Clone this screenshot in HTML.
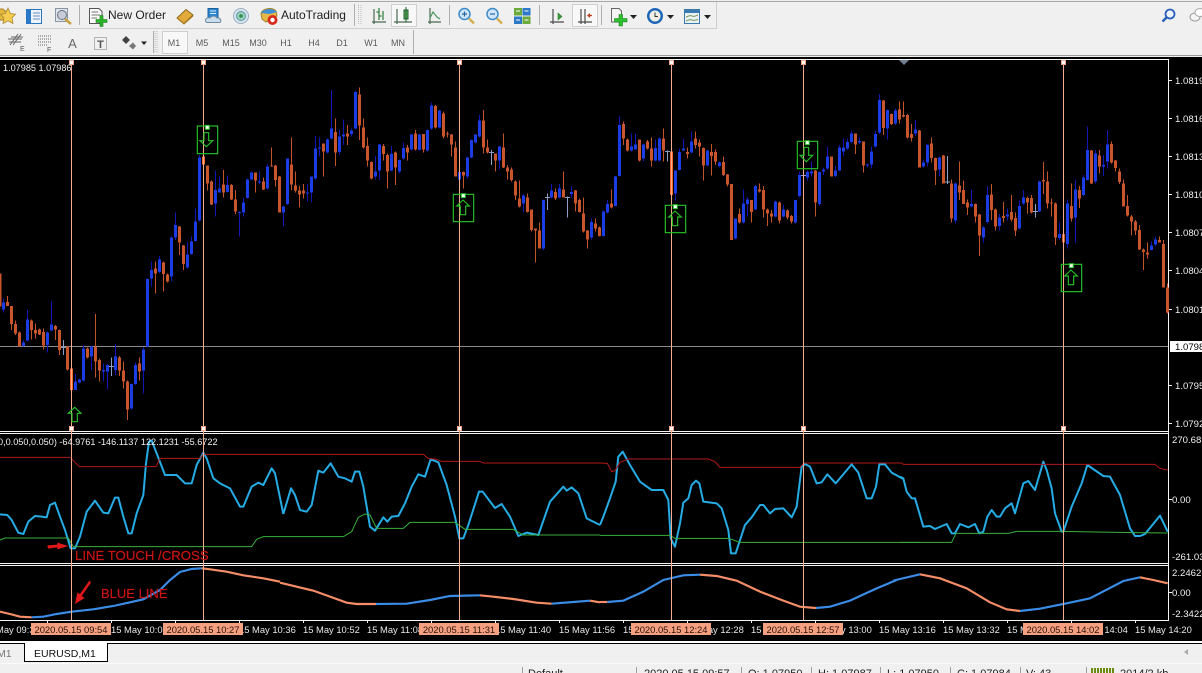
<!DOCTYPE html>
<html><head><meta charset="utf-8"><title>EURUSD,M1</title>
<style>
html,body{margin:0;padding:0;width:1202px;height:673px;overflow:hidden;background:#f0f0f0}
svg{position:absolute;left:0;top:0;display:block}
text{font-family:"Liberation Sans",sans-serif}
.wb,.bb,.wo,.bo,.gr,.ln{fill:none;shape-rendering:crispEdges}
.wb{stroke:#1216b4;stroke-width:3}
.bb{stroke:#1c3ce4;stroke-width:9}
.wo{stroke:#c4532a;stroke-width:3}
.bo{stroke:#c8552c;stroke-width:9}
.gr{stroke:#8fa0c8;stroke-width:3}
.cy{fill:none;stroke:#25ace4;stroke-width:6;stroke-linejoin:round}
.rd{fill:none;stroke:#b01818;stroke-width:3}
.gn{fill:none;stroke:#38b03c;stroke-width:3}
.ib{fill:none;stroke:#3a8ce6;stroke-width:6.5}
.io{fill:none;stroke:#f58e68;stroke-width:6.5}
.ar{fill:none;stroke:#25c025;stroke-width:3.5}
.bx{fill:none;stroke:#25c025;stroke-width:3.5}
.hd{fill:#eefcee;stroke:#25c025;stroke-width:3}
.ax{font-size:9.6px;fill:#f0f0f0}
.lb{font-size:9.15px;fill:#f0f0f0}
.tm{font-size:9.4px;fill:#e8e8e8}
.dl{font-size:9.4px;fill:#2a1208;text-anchor:middle}
.tf{font-size:9px;fill:#5a5a5a;text-anchor:middle}
.st{font-size:11px;fill:#222}
.ic{fill:none;stroke:#4a6a50;stroke-width:1.2}
</style></head>
<body>
<svg width="1202" height="673" viewBox="0 0 1202 673" xmlns="http://www.w3.org/2000/svg">
<!-- chrome -->
<rect width="1202" height="673" fill="#f0f0f0"/>
<rect x="0" y="1" width="1202" height="1" fill="#a8a8a8"/>
<rect x="0" y="28" width="716" height="1" fill="#cfcfcf"/>
<rect x="716" y="2" width="1" height="27" fill="#cfcfcf"/>
<rect x="0" y="55" width="1202" height="1" fill="#9a9a9a"/>
<g fill="#b0b0b0">
<rect x="79" y="5" width="1" height="20"/><rect x="354" y="4" width="1" height="22"/><rect x="449" y="5" width="1" height="20"/><rect x="539" y="5" width="1" height="20"/><rect x="601" y="5" width="1" height="20"/><rect x="413" y="30" width="1" height="24"/><rect x="153" y="31" width="1" height="22"/>
</g>
<path d="M358.5 5V25M361 5V25M155 31V53M157 31V53" stroke="#bbb" stroke-dasharray="1 1" fill="none"/>
<!-- row 1 icons -->
<path d="M-4 9H3L5 11H9V20H-4Z" fill="#e4b83c" stroke="#a88020"/>
<path d="M8 8L10.500 13.500L15.500 14.200L12 18L13 23.500L8 20.800L3 23.500L4 18L.5 14.200L5.500 13.500Z" fill="#f4cc50" stroke="#a88830" stroke-width=".8"/>
<rect x="26.500" y="9.500" width="15" height="14" fill="#eef4fb" stroke="#2a74c4"/><rect x="27" y="10" width="4" height="13" fill="#2a78c8"/><path d="M33 13H40M33 16H40M33 19H40" stroke="#6a90b8"/>
<rect x="55.500" y="8.500" width="12" height="13" fill="#dfe3ea" stroke="#8a94a4"/><circle cx="62" cy="15" r="4.500" fill="#c8ccd8" stroke="#6a7280"/><path d="M65 19L71 24" stroke="#c8a040" stroke-width="2.500"/>
<path d="M89.500 8.500H99L102 11.500V23.500H89.500Z" fill="#fbfbfb" stroke="#555"/><path d="M91.500 12H98M91.500 15H100M91.500 18H97" stroke="#777"/>
<path d="M100 15.500h3v4h4v3h-4v4h-3v-4h-4v-3h4z" fill="#2ab52a" stroke="#137a13" stroke-width=".6"/>
<text x="108" y="19" font-size="12" fill="#222">New Order</text>
<path d="M177 18L186 9.500L193 15L184 23.500Z" fill="#e2aa3a" stroke="#8e6a1c"/><path d="M178 19L184 24L193 16" fill="none" stroke="#a87c20"/>
<path d="M208 8.500H218V18H208Z" fill="#2f86d0" stroke="#1a5ea0"/><path d="M210 11H216M210 13.500H216" stroke="#d8ecfa"/><path d="M206 22c-2-3 2-5 4-4c2-3 6-2 7 0c3-1 5 3 3 4.500H207Z" fill="#c8dcec" stroke="#6c8aa4"/>
<circle cx="241" cy="16" r="7.500" fill="#d8e4ec" stroke="#9cb0c4"/><circle cx="241" cy="16" r="4.500" fill="#9ccfb8" stroke="#5a9ab0"/><circle cx="241" cy="16" r="1.800" fill="#2f8a50"/>
<path d="M261 14C262 8 272 7 276 11L277 16L266 22L262 19Z" fill="#e6b848" stroke="#a08028"/><path d="M261 13C265 8 273 8 277 12L270 14Z" fill="#3c90d8"/>
<circle cx="272.500" cy="20" r="5" fill="#d82a1a"/><circle cx="272.500" cy="20" r="2.200" fill="#fff"/>
<text x="281" y="19" font-size="12" fill="#222">AutoTrading</text>
<g class="ic">
<path d="M372 22H386M374 9V24M372 22" /><path d="M379 8V20M376.500 12H379M379 16H381.500M383 11V20" stroke="#2d7a3a"/>
</g>
<rect x="391.500" y="4.500" width="25" height="22" fill="#f8f8f8" stroke="#cfcfcf"/>
<path d="M394 22H412M397 9V24" class="ic"/><rect x="404" y="10" width="4" height="9" fill="#60b060" stroke="#1e5e2e"/><path d="M406 7V22" stroke="#1e5e2e"/>
<path d="M428 22H441M430 8V24" class="ic"/><path d="M430 18L433 12L437 17L440 19" fill="none" stroke="#4a9a60" stroke-width="1.200"/>
<circle cx="464.500" cy="14" r="5.500" fill="#cfe6fa" stroke="#3c8ac8" stroke-width="1.500"/><path d="M462 14H467M464.500 11.500V16.500" stroke="#2866a8" stroke-width="1.200"/><path d="M469 18.500L474 23.500" stroke="#d4b050" stroke-width="2.500"/>
<circle cx="492.500" cy="14" r="5.500" fill="#cfe6fa" stroke="#3c8ac8" stroke-width="1.500"/><path d="M490 14H495" stroke="#2866a8" stroke-width="1.200"/><path d="M497 18.500L502 23.500" stroke="#d4b050" stroke-width="2.500"/>
<rect x="514" y="8" width="8" height="7.500" fill="#6caa3c"/><rect x="522.500" y="8" width="8" height="7.500" fill="#2e78c8"/><rect x="514" y="16.500" width="8" height="7.500" fill="#2e78c8"/><rect x="522.500" y="16.500" width="8" height="7.500" fill="#6caa3c"/>
<path d="M516 11H520M524.500 11H528.500M516 20H520M524.500 20H528.500" stroke="#fff"/>
<path d="M550 22H564M553 9V24" stroke="#4a4a4a" fill="none" stroke-width="1.200"/><path d="M558 13L562 16.500L558 20Z" fill="#3ca03c" stroke="#2c7a2c" stroke-width=".6"/>
<rect x="572.500" y="4.500" width="25" height="22" fill="#f8f8f8" stroke="#cfcfcf"/>
<path d="M578 22H592M581 9V24M585 9V24" stroke="#4a4a4a" fill="none" stroke-width="1.200"/><path d="M592 15.500H588" stroke="#b84020" stroke-width="1.400"/><path d="M587 15.500L590 13V18Z" fill="#b84020"/>
<path d="M611.500 8.500H619L621.500 11V22H611.500Z" fill="#f5f5f5" stroke="#666"/>
<path d="M619 14.500h3.500v4h4.500v3.500h-4.500v4h-3.500v-4h-4.500v-3.500h4.500z" fill="#2ec02e" stroke="#148014" stroke-width=".6"/>
<path d="M630 15H637L633.500 19Z" fill="#222"/>
<circle cx="655" cy="16" r="8" fill="#1e66b8"/><circle cx="655" cy="16" r="5.500" fill="#f0f0e8"/><path d="M655 12.500V16.500H658" stroke="#333" fill="none"/>
<path d="M667 15H674L670.500 19Z" fill="#222"/>
<rect x="684.500" y="9.500" width="15" height="14" fill="#eaf2f8" stroke="#3a78a8"/><rect x="685" y="10" width="14" height="3" fill="#3a7ab0"/><path d="M686 17L690 15.500L694 16.500L698 15M686 21L690 19.500L694 20.500L698 19.500" fill="none" stroke="#7a9a5a"/>
<path d="M704 15H711L707.500 19Z" fill="#222"/>
<circle cx="1170" cy="14" r="4.500" fill="#eef4fb" stroke="#2a60b8" stroke-width="1.800"/><path d="M1166.500 17.500L1162.500 21.500" stroke="#2a60b8" stroke-width="2.500"/>
<ellipse cx="1195" cy="17" rx="5" ry="4" fill="#f4f4f4" stroke="#999"/><ellipse cx="1200" cy="12.500" rx="5" ry="4" fill="#fff" stroke="#aaa"/>
<!-- row 2 icons -->
<path d="M10 45L18 34M13 45L21 34M8 39H22M9 42H21M11 37H23" stroke="#666" fill="none"/>
<text x="20" y="51" font-size="7" fill="#555">E</text>
<path d="M38 36H51M38 39H51M38 42H51M38 45H47" stroke="#666" stroke-dasharray="1 1" fill="none"/>
<text x="47" y="52" font-size="7" fill="#555">F</text>
<text x="72.500" y="48" font-size="13" fill="#6a6a6a" text-anchor="middle">A</text>
<rect x="94.500" y="37.500" width="12" height="12" fill="none" stroke="#777" stroke-dasharray="1 1"/>
<text x="100.500" y="48" font-size="11" fill="#555" text-anchor="middle" font-weight="bold">T</text>
<path d="M122 40L126 36L130 40L126 44Z" fill="#444"/><path d="M129 46L133 42.500L136 46L133 49.500Z" fill="#777"/>
<path d="M141 41.500H147L144 45Z" fill="#222"/>
<rect x="162.500" y="31.500" width="25" height="22" fill="#f8f8f8" stroke="#cfcfcf"/>
<g class="tf"><text x="174" y="46">M1</text><text x="202" y="46">M5</text><text x="231" y="46">M15</text><text x="258" y="46">M30</text><text x="286" y="46">H1</text><text x="314" y="46">H4</text><text x="342" y="46">D1</text><text x="371" y="46">W1</text><text x="398" y="46">MN</text></g>
<!-- chart -->
<rect x="0" y="57" width="1202" height="585" fill="#000"/>
<g fill="#f4f4f4">
<rect x="0" y="59" width="1168" height="1"/><rect x="0" y="431" width="1168" height="1"/><rect x="0" y="433" width="1168" height="1"/><rect x="0" y="563" width="1168" height="1"/><rect x="0" y="565" width="1168" height="1"/><rect x="0" y="620" width="1168" height="1"/><rect x="1168" y="59" width="1" height="562"/>
</g>
<rect x="0" y="346" width="1168" height="1" fill="#8c8c8c"/>
<!-- candles panel 1 -->
<g transform="translate(.2 60) scale(.33333)">
<path class="wb" d="M10 715V758M70 840V860M82 750V845M142 815V878M154 725V815M226 942V990M238 955V970M250 855V965M274 858V930M310 910V965M322 912V988M346 852V945M394 970V1048M406 908V975M430 862V1000M442 655V862M454 605V680M478 588V640M514 530V665M526 458V540M562 545V625M574 530V585M586 445V545M598 285V485M646 332V470M658 350V395M682 346V398M718 455V530M730 412V470M742 355V415M754 335V360M778 335V372M802 312V388M850 438V498M862 295V435"/>
<path class="bb" d="M10 728V748M70 848V858M82 778V842M142 818V855M154 793V812M226 965V990M238 958V968M250 865V962M274 860V890M310 930V935M322 915V935M346 890V930M394 972V1045M406 915V972M430 868V932M442 657V860M454 630V655M478 598V636M514 532V650M526 495V532M562 584V622M574 545V582M586 485V543M598 292V482M646 390V430M658 385V397M682 375V396M718 456V459M730 428V458M742 358V414M754 337V358M778 365V368M802 320V385M850 440V458M862 296V432"/>
<path class="wo" d="M22 708V738M34 738V810M46 782V825M58 815V860M94 778V838M106 790V835M118 806V825M130 805V868M166 795V840M178 808V885M202 858V932M262 862V895M286 762V952M298 895V965M358 888V948M370 905V985M382 962V1080M418 892V962M466 605V700M490 605V695M502 640V668M538 498V585M550 555V630M622 316V392M634 362V435M670 330V412M694 372V420M706 390V462M766 337V398M790 352V390M814 262V320M826 315V380M838 348V458M874 232V390M886 335V398M898 378V442"/>
<path class="bo" d="M-1 640V740M22 726V738M34 738V792M46 792V820M58 817V860M94 782V810M106 810V820M118 808V824M130 816V856M166 798V808M178 810V870M202 860V928M262 865V892M286 860V905M298 900V932M358 892V932M370 932V965M382 964V1048M418 910V935M466 625V640M490 608V642M502 644V665M538 500V548M550 556V612M622 316V370M634 364V433M670 374V398M694 375V418M706 418V455M766 338V362M790 364V388M814 316V320M826 316V360M838 350V457M874 314V374M886 376V392M898 392V404"/>
<path d="M214 925V990M610 290V314" fill="none" stroke="#f4662a" stroke-width="9" shape-rendering="crispEdges"/>
<path class="gr" d="M190 840V885M182 862H198M334 892V948M326 920H342"/>
</g>
<!-- candles panel 2 -->
<g transform="translate(300.2 60) scale(.33333)">
<path class="wb" d="M22 372V425M34 350V428M46 228V360M58 232V290M82 235V280M94 90V238M118 208V285M130 178V255M154 205V230M166 92V208M226 288V358M238 252V360M274 258V335M298 298V340M310 248V298M334 222V272M358 222V272M382 208V275M394 128V210M418 150V205M478 335V360M502 290V356M514 238V295M526 222V250M538 165V232M598 258V328M670 402V458M730 418V570M754 372V415M778 372V415M814 378V412M874 475V538"/>
<path class="bb" d="M22 397V400M34 350V398M46 265V356M58 262V265M82 238V278M94 206V236M118 230V276M130 224V230M154 212V222M166 96V205M226 335V350M238 254V332M274 282V332M298 300V335M310 264V296M334 224V268M358 224V270M382 210V272M394 137V205M418 152V202M478 336V358M502 292V350M514 240V293M526 224V248M538 182V230M598 260V302M670 406V430M730 420V565M754 392V412M778 386V412M814 396V402M874 486V532"/>
<path class="wo" d="M10 372V415M70 250V350M106 175V318M142 195V255M178 82V240M190 175V265M202 232V320M214 305V358M250 252V302M262 280V386M286 275V375M322 255V302M346 210V272M370 222V278M406 135V205M430 155V235M442 215V232M454 222V290M466 245V350M490 335V386M550 150V280M562 238V280M586 280V335M610 220V324M622 315V358M634 322V365M646 362V420M658 362V442M682 400V458M694 448V515M706 505V608M718 488V566M766 385V420M790 335V412M826 390V455M838 415V458M850 412V518M862 510V566M886 475V515M898 500V530"/>
<path class="bo" d="M10 392V400M70 250V275M106 216V278M142 220V230M178 103V197M190 202V263M202 258V302M214 306V356M250 258V282M262 285V335M286 278V322M322 262V278M346 220V268M370 222V268M406 138V203M430 160V230M442 220V224M454 224V254M466 262V350M490 336V346M550 182V262M562 263V277M586 280V302M610 262V322M622 322V334M634 328V360M646 364V406M658 415V440M682 412V456M694 448V510M706 506V512M718 512V566M766 396V416M790 388V412M826 392V430M838 420V456M850 460V515M862 512V538M886 490V506M898 502V528"/>
<path class="gr" d="M574 270V315M566 278H582M742 400V450M734 412H750M802 410V473M794 412H810"/>
</g>
<!-- candles panel 3 -->
<g transform="translate(600.2 60) scale(.33333)">
<path class="wb" d="M10 452V530M22 420V460M46 348V440M58 168V350M94 220V275M106 222V268M130 252V305M166 238V305M178 232V305M226 330V422M238 265V332M250 236V272M274 215V280M322 270V318M358 305V322M406 475V538M430 388V490M442 412V470M466 375V450M526 422V472M550 435V472M586 420V490M598 335V412M622 332V362M634 305V350M658 335V438M670 322V345M682 260V330M706 318V352M718 255V335M730 235V288M742 235V270M754 212V250M778 232V252M802 310V322M814 260V325M826 212V262M838 102V222M862 148V238M886 145V195"/>
<path class="bb" d="M10 454V528M22 432V458M46 350V438M58 195V348M94 260V272M106 254V268M130 254V296M166 264V302M178 235V302M226 332V400M238 276V330M250 265V272M274 244V278M322 272V316M358 308V318M406 476V536M430 430V488M442 418V432M466 378V448M526 424V470M550 448V470M586 420V488M598 345V408M622 336V352M634 334V340M658 336V432M670 328V335M682 290V326M706 332V348M718 262V332M730 262V274M742 246V266M754 220V246M778 243V247M802 313V316M814 275V314M826 222V260M838 120V218M862 150V205M886 152V190"/>
<path class="wo" d="M34 388V445M70 185V255M82 235V275M118 238V305M142 240V268M154 232V320M190 205V305M262 262V296M286 215V266M298 238V290M310 262V362M334 252V346M346 268V315M370 290V348M382 342V380M394 372V540M418 445V490M454 420V488M478 370V398M490 378V472M502 445V498M514 450V488M538 425V490M562 448V478M574 465V490M646 330V470M694 290V350M766 220V282M790 244V338M850 120V225M874 160V195M898 125V190"/>
<path class="bo" d="M-2 502V528M34 430V442M70 192V236M82 238V272M118 238V302M142 244V265M154 265V302M190 236V272M262 276V282M286 236V255M298 247V260M310 264V316M334 276V288M346 276V305M370 306V345M382 344V374M394 372V540M418 462V488M454 420V456M478 388V394M490 390V448M502 448V460M514 460V470M538 428V482M562 452V472M574 468V485M646 332V428M694 290V350M766 220V254M790 244V316M850 122V204M874 162V192M898 148V178"/>
<path d="M214 275V405" fill="none" stroke="#f4662a" stroke-width="9" shape-rendering="crispEdges"/>
<path class="gr" d="M202 272V305M194 275H210M610 335V355M602 346H618"/>
</g>
<!-- candles panel 4 -->
<g transform="translate(900.2 60) scale(.33333)">
<path class="wb" d="M46 180V228M70 298V322M82 252V320M118 290V350M166 368V490M214 390V442M250 498V548M262 378V490M298 462V512M322 445V482M358 422V508M370 390V435M418 362V456M478 488V540M502 418V565M526 358V548M550 345V408M562 200V362M586 270V370M610 285V348M622 210V325M754 545V572M766 530V560"/>
<path class="bb" d="M46 208V220M70 308V320M82 255V308M118 292V328M166 370V482M214 432V440M250 502V532M262 405V486M298 472V498M322 464V470M358 438V505M370 412V430M418 365V454M478 522V534M502 430V552M526 388V472M550 352V405M562 270V360M586 280V365M610 315V320M622 253V305M754 556V570M766 538V554"/>
<path class="wo" d="M10 125V172M22 162V235M34 192V245M58 210V322M94 232V308M106 292V375M130 285V370M154 358V488M178 305V420M190 362V432M202 418V465M226 430V488M238 462V588M274 372V480M286 445V512M310 426V488M334 405V485M346 458V528M382 410V460M394 405V460M430 306V402M442 335V445M454 415V470M466 428V555M490 520V560M514 370V485M538 378V444M574 270V372M598 270V340M634 245V310M646 300V335M658 325V372M670 358V440M682 405V470M694 465V526M706 480V525M718 495V570M730 566V630M742 548V596M778 530V548M790 540V682M802 670V760"/>
<path class="bo" d="M10 165V170M22 165V233M34 222V234M58 212V322M94 250V294M106 294V332M130 286V370M154 370V476M178 376V398M190 390V432M202 428V442M226 432V470M238 464V526M274 404V450M286 448V500M310 468V474M334 456V478M346 474V512M382 414V428M394 414V458M430 360V365M442 364V430M454 427V431M466 430V532M490 522V548M514 438V476M538 390V416M574 271V370M598 286V320M634 252V308M646 302V324M658 334V366M670 370V440M682 438V466M694 470V484M706 484V512M718 510V568M730 568V576M742 578V584M778 540V548M790 552V682M802 682V758"/>
<path class="gr" d="M142 288V372M134 366H150M406 432V472M398 455H414"/>
</g>
<!-- indicator blue -->
<g transform="translate(0 420) scale(.33333)"><polyline class="cy" points="0,283 22,285 35,300 55,338 70,342 85,305 105,288 125,290 140,292 150,255 165,248 180,290 195,330 212,385 225,385 240,350 260,275 285,242 310,278 325,280 345,233 355,233 370,290 385,340 395,340 410,280 430,225 438,130 447,65 455,62 470,100 495,165 520,165 530,165 555,190 575,190 590,135 610,98 620,115 640,175 660,190 690,205 720,260 730,260 755,200 775,188 790,195 815,145 825,160 850,282"/>
<polyline class="rd" points="0,112 210,112 238,140 468,140 480,115 600,115 610,103 840,103"/>
<polyline class="gn" points="0,360 15,354 205,354 220,380 755,380 770,358 790,350 840,350"/></g>
<g transform="translate(280 430) scale(.33333)"><polyline class="cy" points="10,252 33,175 45,195 60,240 80,245 95,225 115,122 130,128 152,100 175,140 195,145 215,155 225,125 238,125 250,170 270,290 285,302 310,262 322,275 335,260 355,258 375,220 395,170 415,133 435,140 452,88 475,97 500,165 525,260 538,325 550,325 565,285 597,185 608,185 645,234 665,222 690,260 715,318 740,308 775,315 810,215 850,170 860,182 875,172 895,190 920,265 960,285"/>
<polyline class="rd" points="0,73 430,73 445,85 470,88 485,94 600,94 610,99 960,99"/>
<polyline class="gn" points="0,320 190,320 215,305 235,262 255,252 270,255 290,295 370,295 390,277 525,277 555,298 700,298 730,315 960,315"/></g>
<g transform="translate(600 430) scale(.33333)"><polyline class="cy" points="0,285 10,260 30,205 47,155 55,80 68,65 90,105 120,155 155,180 190,180 205,210 212,325 225,350 240,280 250,218 265,205 275,165 288,152 298,160 310,215 350,220 365,235 385,300 393,370 407,370 435,285 455,262 480,225 490,225 510,250 525,237 550,235 575,262 590,230 605,110 615,102 630,110 650,160 665,157 682,133 707,160 755,103 775,128 800,205 815,205 828,170 838,103 855,103 875,128 910,147"/>
<polyline class="rd" points="0,99 22,100 35,125 45,122 60,97 85,87 325,87 345,95 360,112 600,112 612,99 905,99 910,103 960,103"/>
<polyline class="gn" points="0,316 210,316 225,325 385,325 420,337 960,337"/></g>
<g transform="translate(900 420) scale(.33333)"><polyline class="cy" points="0,170 10,175 20,215 35,235 45,235 70,320 90,318 105,327 140,312 155,340 165,340 180,312 205,322 225,312 238,340 250,335 262,290 275,270 290,290 300,290 315,265 335,250 345,280 370,190 385,183 405,210 430,125 440,150 455,205 465,280 485,335 490,335 515,260 545,190 562,135 610,168 630,170 660,225 690,325 705,348 720,348 735,342 780,287 803,335"/>
<polyline class="rd" points="60,133 765,133 780,145 803,150"/>
<polyline class="gn" points="0,367 155,367 168,340 325,340 350,334 480,334 700,338 803,339"/></g>
<!-- indicator 2 -->
<g transform="translate(0 420) scale(.33333)">
<polyline class="io" points="0,575 30,582 60,590 95,592"/>
<polyline class="ib" points="95,592 130,590 170,582 215,575 280,568 340,558 430,538 480,510 510,480 540,456 575,447 605,445"/>
<polyline class="io" points="605,445 630,448 680,455 730,466 790,475 840,485"/></g>
<g transform="translate(280 430) scale(.33333)">
<polyline class="io" points="0,458 50,470 100,482 150,500 200,518 230,522 288,522"/>
<polyline class="ib" points="288,522 380,521 450,510 510,498 600,496"/>
<polyline class="io" points="600,496 640,500 700,507 770,518 815,521"/>
<polyline class="ib" points="815,521 880,516 930,512"/>
<polyline class="io" points="930,512 960,517"/></g>
<g transform="translate(600 430) scale(.33333)">
<polyline class="io" points="0,516 22,516"/>
<polyline class="ib" points="22,516 70,512 130,485 190,450 250,436 300,434"/>
<polyline class="io" points="300,434 350,438 410,452 480,485 550,512 600,530 648,534"/>
<polyline class="ib" points="648,534 690,530 750,512 830,475 890,450"/></g>
<g transform="translate(900 420) scale(.33333)">
<polyline class="ib" points="-20,482 0,477 60,463"/>
<polyline class="io" points="60,463 120,475 200,505 270,547 320,568 360,573"/>
<polyline class="ib" points="360,573 420,566 500,550 570,535 670,483 720,472"/>
<polyline class="io" points="720,472 760,480 803,490"/></g>
<!-- vertical lines -->
<g stroke="#f6ab8e" stroke-width="1" fill="none">
<path d="M71.500 62V620M203.500 62V620M459.500 62V620M671.500 62V620M803.500 62V620M1063.500 62V620"/>
</g>
<g fill="#fff" stroke="#f2a488" stroke-width="1">
<rect x="69.500" y="60.500" width="4" height="4"/><rect x="201.500" y="60.500" width="4" height="4"/><rect x="457.500" y="60.500" width="4" height="4"/><rect x="669.500" y="60.500" width="4" height="4"/><rect x="801.500" y="60.500" width="4" height="4"/><rect x="1061.500" y="60.500" width="4" height="4"/>
<rect x="69.500" y="426.500" width="4" height="4"/><rect x="201.500" y="426.500" width="4" height="4"/><rect x="457.500" y="426.500" width="4" height="4"/><rect x="669.500" y="426.500" width="4" height="4"/><rect x="801.500" y="426.500" width="4" height="4"/><rect x="1061.500" y="426.500" width="4" height="4"/>
</g>
<path d="M899 60H909L904 65Z" fill="#6f8090"/>
<!-- arrows -->
<g transform="translate(0 60) scale(.33333)">
<path class="ar" d="M224 1042L243 1060H232V1085H216V1060H205Z"/>
<rect class="bx" x="592" y="198" width="61" height="83"/>
<path class="ar" d="M612 218H626V242H638L619 260L600 242H612Z"/>
<rect class="hd" x="616" y="196" width="12" height="12"/>
</g>
<g transform="translate(300 60) scale(.33333)">
<rect class="bx" x="460" y="403" width="61" height="82"/>
<path class="ar" d="M489 420L508 438H497V464H481V438H470Z"/>
<rect class="hd" x="484" y="401" width="12" height="12"/>
</g>
<g transform="translate(600 60) scale(.33333)">
<rect class="bx" x="196" y="436" width="61" height="82"/>
<path class="ar" d="M225 453L244 471H233V497H217V471H206Z"/>
<rect class="hd" x="220" y="434" width="12" height="12"/>
<rect class="bx" x="592" y="244" width="61" height="82"/>
<path class="ar" d="M612 262H626V286H638L619 305L600 286H612Z"/>
<rect class="hd" x="616" y="242" width="12" height="12"/>
</g>
<g transform="translate(900 60) scale(.33333)">
<rect class="bx" x="484" y="613" width="61" height="82"/>
<path class="ar" d="M513 630L532 648H521V674H505V648H494Z"/>
<rect class="hd" x="508" y="611" width="12" height="12"/>
</g>
<!-- annotations -->
<g transform="translate(0 420) scale(.33333)" fill="#e01818">
<path d="M142 376L172 374V368L205 378L172 388V382L144 386Z"/>
<path d="M268 482L273 488L245 528L254 534L225 552L232 518L240 522Z"/>
</g>
<text x="75" y="560" font-size="13.200" fill="#cc1414" stroke="#cc1414" stroke-width=".2">LINE TOUCH /CROSS</text>
<text x="101" y="598" font-size="13" fill="#cc1414" stroke="#cc1414" stroke-width=".2">BLUE LINE</text>
<!-- labels -->
<text x="3" y="71" class="lb">1.07985 1.07986</text>
<text x="-2" y="445" class="lb">0,0.050,0.050) -64.9761 -146.1137 122.1231 -55.6722</text>
<g stroke="#f0f0f0" fill="none"><path d="M1169 80.500H1172M1169 118.500H1172M1169 156.500H1172M1169 194.500H1172M1169 232.500H1172M1169 270.500H1172M1169 309.500H1172M1169 385.500H1172M1169 423.500H1172M1169 499.500H1172M1169 592.500H1172"/></g>
<g class="ax">
<text x="1175" y="84">1.0819</text><text x="1175" y="122">1.0816</text><text x="1175" y="160">1.0813</text><text x="1175" y="198">1.0810</text><text x="1175" y="236">1.0807</text><text x="1175" y="274">1.0804</text><text x="1175" y="313">1.0801</text><text x="1175" y="389">1.0795</text><text x="1175" y="427">1.0792</text>
<text x="1172" y="443">270.685</text><text x="1172" y="503">0.00</text><text x="1172" y="560">-261.03</text><text x="1172" y="576">2.2462</text><text x="1172" y="596">0.00</text><text x="1172" y="617">-2.3422</text>
</g>
<rect x="1170" y="341" width="32" height="11" fill="#fff"/>
<text x="1175" y="350" font-size="9.600" fill="#000">1.0798</text>
<!-- time axis -->
<path d="M47.500 620V623M111.500 620V623M175.500 620V623M239.500 620V623M303.500 620V623M367.500 620V623M431.500 620V623M495.500 620V623M559.500 620V623M623.500 620V623M687.500 620V623M751.500 620V623M815.500 620V623M879.500 620V623M943.500 620V623M1007.500 620V623M1071.500 620V623M1135.500 620V623" stroke="#f0f0f0" fill="none"/>
<g class="tm">
<text x="-17" y="633">15 May 09:38</text><text x="111" y="633">15 May 10:04</text><text x="239" y="633">15 May 10:36</text><text x="303" y="633">15 May 10:52</text><text x="367" y="633">15 May 11:08</text><text x="495" y="633">15 May 11:40</text><text x="559" y="633">15 May 11:56</text><text x="623" y="633">15 May 12:12</text><text x="687" y="633">15 May 12:28</text><text x="751" y="633">15 May 12:44</text><text x="815" y="633">15 May 13:00</text><text x="879" y="633">15 May 13:16</text><text x="943" y="633">15 May 13:32</text><text x="1007" y="633">15 May 13:48</text><text x="1071" y="633">15 May 14:04</text><text x="1135" y="633">15 May 14:20</text>
</g>
<g fill="#f6a082">
<rect x="31" y="623" width="80" height="12"/><rect x="163" y="623" width="80" height="12"/><rect x="419" y="623" width="80" height="12"/><rect x="631" y="623" width="80" height="12"/><rect x="763" y="623" width="80" height="12"/><rect x="1023" y="623" width="80" height="12"/>
</g>
<g class="dl">
<text x="71" y="633">2020.05.15 09:54</text><text x="203" y="633">2020.05.15 10:27</text><text x="459" y="633">2020.05.15 11:31</text><text x="671" y="633">2020.05.15 12:24</text><text x="803" y="633">2020.05.15 12:57</text><text x="1063" y="633">2020.05.15 14:02</text>
</g>
<!-- tabs -->
<rect x="0" y="641" width="1202" height="2" fill="#fff"/>
<rect x="0" y="643" width="1202" height="1" fill="#000"/>
<rect x="0" y="644" width="1202" height="19" fill="#f0f0f0"/>
<text x="-3" y="657" font-size="10.500" fill="#777">M1</text>
<path d="M24.500 643V661.500H107.500V643" fill="#fff" stroke="#000"/>
<text x="34" y="657" font-size="10.500" fill="#111">EURUSD,M1</text>
<path d="M1188 649V655L1184 652Z" fill="#aaa"/>
<rect x="0" y="663" width="1202" height="1" fill="#fafafa"/>
<rect x="0" y="664" width="1202" height="9" fill="#f0f0f0"/>
<!-- status bar -->
<path d="M522.500 667V673M636.500 667V673M741.500 667V673M811.500 667V673M880.500 667V673M950.500 667V673M1020.500 667V673M1086.500 667V673" stroke="#a0a0a0" fill="none"/>
<g class="st">
<text x="528" y="677">Default</text><text x="644" y="677">2020.05.15 09:57</text><text x="748" y="677">O: 1.07950</text><text x="818" y="677">H: 1.07987</text><text x="887" y="677">L: 1.07950</text><text x="957" y="677">C: 1.07984</text><text x="1026" y="677">V: 43</text><text x="1120" y="677">2014/2 kb</text>
</g>
<path d="M1092 668V673M1095 668V673M1098 668V673M1101 668V673M1104 668V673M1107 668V673M1110 668V673M1113 668V673" stroke="#6a8a10" stroke-width="2" fill="none"/>
</svg>
</body></html>
